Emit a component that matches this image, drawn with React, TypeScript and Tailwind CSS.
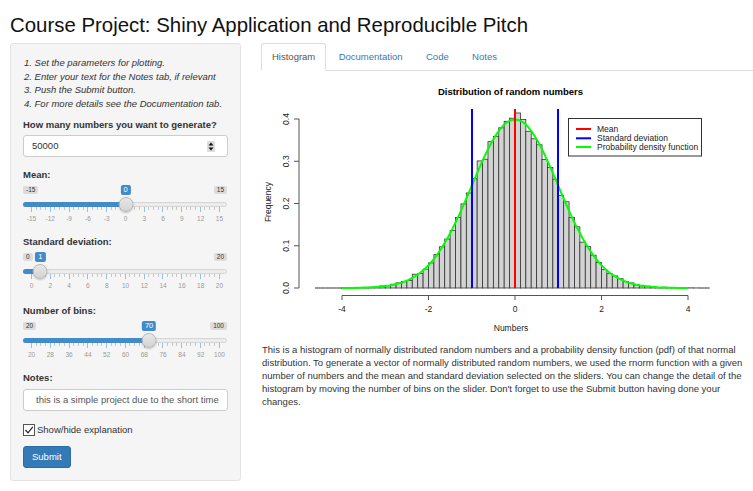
import React from 'react';

// deterministic noise so the histogram looks the same on every render
function mulberry32(seed: number) {
  return () => {
    seed |= 0;
    seed = (seed + 0x6d2b79f5) | 0;
    let t = Math.imul(seed ^ (seed >>> 15), 1 | seed);
    t = (t + Math.imul(t ^ (t >>> 7), 61 | t)) ^ t;
    return ((t ^ (t >>> 14)) >>> 0) / 4294967296;
  };
}

function erf(x: number) {
  const s = Math.sign(x);
  x = Math.abs(x);
  const t = 1 / (1 + 0.3275911 * x);
  const y = 1 - ((((1.061405429 * t - 1.453152027) * t + 1.421413741) * t - 0.284496736) * t + 0.254829592) * t * Math.exp(-x * x);
  return s * y;
}

const phi = (x: number) => 0.5 * (1 + erf(x / Math.SQRT2));
const dnorm = (x: number) => Math.exp(-x * x / 2) / Math.sqrt(2 * Math.PI);

const X = (v: number) => 515 + v * 43.25;
const Y = (d: number) => 288 - d * 422.5;

function makeBins() {
  const rand = mulberry32(42);
  const gauss = () => {
    const u = Math.max(rand(), 1e-9);
    const v = rand();
    return Math.sqrt(-2 * Math.log(u)) * Math.cos(2 * Math.PI * v);
  };
  const n = 50000;
  const w = 0.125;
  const bins: { x: number; d: number }[] = [];
  for (let b = -4.625; b < 4.5; b += w) {
    const expected = n * (phi(b + w) - phi(b));
    const count = Math.max(0, Math.round(expected + Math.sqrt(expected) * gauss()));
    bins.push({ x: b, d: count / (n * w) });
  }
  return bins;
}

function Histogram() {
  const bins = React.useMemo(makeBins, []);
  const curve = React.useMemo(() => {
    const pts: string[] = [];
    for (let v = -4; v <= 4.0001; v += 0.05) pts.push(`${X(v).toFixed(1)},${Y(dnorm(v)).toFixed(1)}`);
    return 'M' + pts.join(' L');
  }, []);
  const bw = 0.125 * 43.25;
  const font = { fontFamily: '"Liberation Sans", Arial, sans-serif' };

  return (
    <svg width={492} height={272} viewBox="261 71 492 272" className="block" style={font}>
      <text x={510.5} y={94.5} textAnchor="middle" fontSize={9.5} fontWeight="bold" fill="#000">
        Distribution of random numbers
      </text>

      {bins.map((b, i) =>
        b.d > 0 ? (
          <rect key={i} x={X(b.x)} y={Y(b.d)} width={bw} height={b.d * 422.5} fill="#d3d3d3" stroke="#333" strokeWidth={0.8} />
        ) : (
          <line key={i} x1={X(b.x)} x2={X(b.x) + bw} y1={288} y2={288} stroke="#333" strokeWidth={1} />
        )
      )}

      <path d={curve} fill="none" stroke="#00ff00" strokeWidth={2} />
      <line x1={515} x2={515} y1={109} y2={288} stroke="#ff0000" strokeWidth={2} />
      <line x1={472} x2={472} y1={109} y2={288} stroke="#0000ff" strokeWidth={2} />
      <line x1={558} x2={558} y1={109} y2={288} stroke="#0000ff" strokeWidth={2} />

      {/* y axis */}
      <line x1={299} x2={299} y1={119} y2={288} stroke="#555" strokeWidth={1} />
      {[0, 0.1, 0.2, 0.3, 0.4].map((t) => (
        <g key={t}>
          <line x1={294} x2={299} y1={Y(t)} y2={Y(t)} stroke="#555" strokeWidth={1} />
          <text x={286} y={Y(t)} fontSize={8.5} fill="#222" textAnchor="middle" dominantBaseline="central" transform={`rotate(-90 286 ${Y(t)})`}>
            {t.toFixed(1)}
          </text>
        </g>
      ))}
      <text x={268} y={202} fontSize={8.5} fill="#222" textAnchor="middle" dominantBaseline="central" transform="rotate(-90 268 202)">
        Frequency
      </text>

      {/* x axis */}
      <line x1={342} x2={688} y1={295.5} y2={295.5} stroke="#555" strokeWidth={1} />
      {[-4, -2, 0, 2, 4].map((t) => (
        <g key={t}>
          <line x1={X(t)} x2={X(t)} y1={295.5} y2={300} stroke="#555" strokeWidth={1} />
          <text x={X(t)} y={309} fontSize={8.5} fill="#222" textAnchor="middle" dominantBaseline="central">
            {t}
          </text>
        </g>
      ))}
      <text x={511} y={328} fontSize={8.5} fill="#222" textAnchor="middle" dominantBaseline="central">
        Numbers
      </text>

      {/* legend */}
      <rect x={568.5} y={118.5} width={133} height={37.5} fill="#fff" stroke="#333" strokeWidth={1} />
      {[
        { c: '#ff0000', t: 'Mean', y: 129 },
        { c: '#0000ff', t: 'Standard deviation', y: 138.3 },
        { c: '#00ff00', t: 'Probability density function', y: 147 },
      ].map((l) => (
        <g key={l.t}>
          <line x1={576} x2={591} y1={l.y} y2={l.y} stroke={l.c} strokeWidth={2} />
          <text x={597} y={l.y} fontSize={8.5} fill="#222" dominantBaseline="central">
            {l.t}
          </text>
        </g>
      ))}
    </svg>
  );
}

interface SliderProps {
  min: number;
  max: number;
  value: number;
  step: number;
}

function Slider({ min, max, value, step }: SliderProps) {
  const frac = (value - min) / (max - min);
  const cx = 8 + frac * 189;
  const labels = Array.from({ length: 11 }, (_, i) => min + i * step);
  const ticks = Array.from({ length: 41 }, (_, i) => i % 4 === 0);

  return (
    <div className="relative w-[205px] pb-[2px]">
      <div className="flex items-start justify-between pr-[1px] pt-[4px] text-[6.5px] leading-[8px] text-[#333]">
        <span className="rounded-[2px] bg-black/10 px-[3px]">{min}</span>
        <span className="rounded-[2px] bg-black/10 px-[3px]">{max}</span>
      </div>

      <div className="relative mr-[1px] mt-[8px] h-[5px] rounded-full border border-[#d5d5d5] bg-[#ececec]">
        <div className="absolute -left-px -top-px h-[5px] rounded-l-full bg-[#428bca]" style={{ width: cx }} />
      </div>

      <div className="flex h-[5px] items-start justify-between px-[8px]">
        {ticks.map((major, i) => (
          <span key={i} className={major ? 'h-[5px] w-px bg-[#428bca]/50' : 'h-[3px] w-px bg-[#999]/50'} />
        ))}
      </div>

      <div className="mt-[3px] flex justify-between px-[8.5px] text-[6.5px] leading-[8px] text-[#999]">
        {labels.map((l) => (
          <span key={l} className="flex w-0 justify-center whitespace-nowrap">
            {l}
          </span>
        ))}
      </div>

      {/* value bubble and handle sit over the track */}
      <span className="absolute top-[3px] -translate-x-1/2 rounded-[2px] bg-[#428bca] px-[3px] text-[7.5px] leading-[10px] text-white" style={{ left: cx }}>
        {value}
      </span>
      <span className="absolute top-[15px] h-[15px] w-[15px] -translate-x-1/2 rounded-full border border-[#b8b8b8] bg-gradient-to-b from-[#e8e8e8] to-[#d3d3d3] shadow-[0_1px_2px_rgba(0,0,0,0.2)]" style={{ left: cx }} />
    </div>
  );
}

export default function App() {
  return (
    <div className="min-h-[491px] w-[753px] overflow-hidden bg-white pl-[10px] text-[#333]" style={{ fontFamily: '"Liberation Sans", Arial, sans-serif' }}>
      <h2 className="pt-[14px] text-[20.4px] leading-[22px] text-[#111]">Course Project: Shiny Application and Reproducible Pitch</h2>

      <div className="mt-[7px] flex gap-[20px]">
        {/* sidebar */}
        <div className="w-[231px] shrink-0 rounded-[3px] border border-[#e3e3e3] bg-[#f5f5f5] px-[12px] pb-[12px] pt-[12px] text-[9.5px]">
          <div className="pl-[1px] italic leading-[13.6px]">
            <p>1. Set the parameters for plotting.</p>
            <p>2. Enter your text for the Notes tab, if relevant</p>
            <p>3. Push the Submit button.</p>
            <p>4. For more details see the Documentation tab.</p>
          </div>

          <label className="mt-[8px] block h-[14px] font-bold leading-[14px]">How many numbers you want to generate?</label>
          <div className="mt-[3px] flex h-[22px] items-center justify-between rounded-[3px] border border-[#ccc] bg-white pl-[8px] pr-[12px]">
            <span>50000</span>
            <svg width="8" height="11" viewBox="0 0 8 11">
              <rect x="0" y="0" width="8" height="11" rx="1" fill="#ddd" />
              <path d="M4 1.5 L6.5 4.5 L1.5 4.5 Z" fill="#111" />
              <path d="M4 9.5 L6.5 6.5 L1.5 6.5 Z" fill="#111" />
            </svg>
          </div>

          <label className="mt-[11px] block h-[14px] font-bold leading-[14px]">Mean:</label>
          <Slider min={-15} max={15} value={0} step={3} />

          <label className="mt-[10px] block h-[14px] font-bold leading-[14px]">Standard deviation:</label>
          <Slider min={0} max={20} value={1} step={2} />

          <label className="mt-[12px] block h-[14px] font-bold leading-[14px]">Number of bins:</label>
          <Slider min={20} max={100} value={70} step={8} />

          <label className="mt-[10px] block h-[14px] font-bold leading-[14px]">Notes:</label>
          <div className="mt-[4px] flex h-[22px] items-center overflow-hidden whitespace-nowrap rounded-[3px] border border-[#ccc] bg-white pl-[12px] text-[#555]">
            this is a simple project due to the short time
          </div>

          <div className="mt-[12px] flex h-[14px] items-center gap-[2px]">
            <span className="flex h-[12px] w-[12px] items-center justify-center border border-[#555] bg-white">
              <svg width="10" height="10" viewBox="0 0 10 10">
                <path d="M1.5 5 L4 7.8 L8.8 1.8" fill="none" stroke="#222" strokeWidth="1.2" />
              </svg>
            </span>
            <span className="leading-[14px]">Show/hide explanation</span>
          </div>

          <button className="mt-[9px] h-[22px] rounded-[3px] border border-[#2e6da4] bg-[#337ab7] px-[8px] leading-[14px] text-white">Submit</button>
        </div>

        {/* main panel */}
        <div className="w-[492px] shrink-0">
          <ul className="flex h-[28px] gap-[1.4px] border-b border-[#ddd] text-[9.5px] leading-[13.6px]">
            <li className="-mb-px rounded-t-[3px] border border-[#ddd] border-b-transparent bg-white px-[10px] py-[6px] text-[#555]">Histogram</li>
            <li className="border border-transparent px-[10px] py-[6px] text-[#337ab7]">Documentation</li>
            <li className="border border-transparent px-[10px] py-[6px] text-[#337ab7]">Code</li>
            <li className="border border-transparent px-[10px] py-[6px] text-[#337ab7]">Notes</li>
          </ul>

          <Histogram />

          <p className="pl-[1px] pr-[8px] text-[9.5px] leading-[13px]">
            This is a histogram of normally distributed random numbers and a probability density function (pdf) of that normal distribution. To generate a vector of normally distributed random numbers, we used the rnorm function with a given number of numbers and the mean and standard deviation selected on the sliders. You can change the detail of the histogram by moving the number of bins on the slider. Don't forget to use the Submit button having done your changes.
          </p>
        </div>
      </div>
    </div>
  );
}
